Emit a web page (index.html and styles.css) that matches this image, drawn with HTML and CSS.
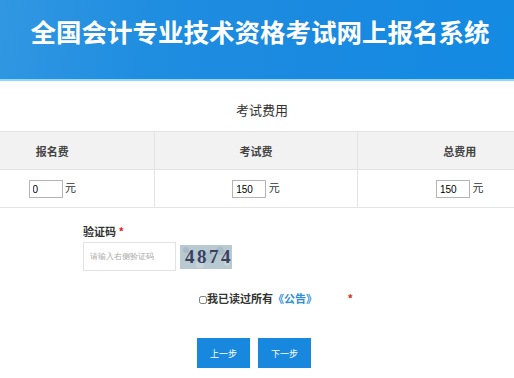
FILE: index.html
```html
<!DOCTYPE html>
<html>
<head>
    <title>全国会计专业技术资格考试网上报名系统</title>
    <link rel="stylesheet" href="styles.css">
</head>
<body>
    <div class="top">
        <p class="top-title">全国会计专业技术资格考试网上报名系统</p>
    </div>
    <!-- fees -->
    <p class="fee-title">考试费用</p>
    <div class="fee-wrap">
        <table class="fees">
            <tr>
                <th>报名费</th>
                <th>考试费</th>
                <th>总费用</th>
            </tr>
            <tr>
                <td><input type="text" class="money" value="0"> 元</td>
                <td><input type="text" class="money" value="150"> 元</td>
                <td><input type="text" class="money" value="150"> 元</td>
            </tr>
        </table>
    </div>
    <!-- captcha -->
    <div class="code">
        <label class="lbl" for="yzm">验证码 <span class="red">*</span></label>
        <div class="code-row">
            <input type="text" id="yzm" class="code-input" placeholder="请输入右侧验证码">
            <div class="code-img">
                <svg width="52" height="24" viewBox="0 0 52 24">
                    <rect width="52" height="24" fill="#b9c9d1"/>
                    <circle cx="6" cy="5" r="3" fill="#a6bbc6"/>
                    <circle cx="20" cy="19" r="4" fill="#c7d5db"/>
                    <circle cx="40" cy="6" r="4" fill="#a9bdc7"/>
                    <circle cx="47" cy="18" r="3" fill="#c6d4da"/>
                    <circle cx="30" cy="12" r="5" fill="#adc1ca"/>
                </svg>
                <span class="code-txt">4874</span>
            </div>
        </div>
    </div>
    <div class="agree">
        <label><input type="checkbox" class="chk">我已读过所有<a href="#" class="notice">《公告》</a></label>
        <span class="red star">*</span>
    </div>
    <div class="btns">
        <button class="btn">上一步</button>
        <button class="btn">下一步</button>
    </div>
</body>
</html>
```

FILE: styles.css
```css
body {
    margin: 0;
    overflow: hidden;
    font-family: "Noto Sans CJK SC", "Noto Sans", sans-serif;
    color: #333;
    background-color: #fff;
}
.top {
    height: 79px;
    background: linear-gradient(100deg, #3197e2 0%, #1f8de0 30%, #1a8ae0 60%, #138ae3 100%);
    border-bottom: 2px solid #8fd8f5;
}
.top-title {
    margin: 0;
    padding-top: 13px;
    padding-left: 6px;
    text-align: center;
    font-size: 25.5px;
    font-weight: bold;
    line-height: 36px;
    color: #fff;
}
.fee-title {
    margin: 19px 0 0 0;
    text-align: center;
    font-size: 13px;
    line-height: 20px;
    padding-left: 10px;
}
.fee-wrap {
    margin-top: 11px;
    overflow: hidden;
}
.fees {
    margin-left: -50px;
    width: 612px;
    border-collapse: collapse;
    font-size: 11px;
}
.fees th {
    height: 35px;
    width: 204px;
    background-color: #f2f2f2;
    border: 1px solid #e4e4e4;
    font-weight: bold;
    color: #444;
}
.fees td {
    height: 35px;
    border: 1px solid #e4e4e4;
    text-align: center;
}
.money {
    width: 26px;
    height: 16px;
    padding: 0 3px;
    margin: 0;
    border: 1px solid #b5b5b5;
    font-size: 10px;
    font-family: "Liberation Sans", sans-serif;
    vertical-align: middle;
}
.code {
    margin: 15px 0 0 83px;
}
.lbl {
    display: block;
    font-size: 11px;
    font-weight: bold;
    line-height: 16px;
}
.red {
    color: #e02020;
}
.code-row {
    display: flex;
    align-items: center;
    margin-top: 3px;
}
.code-input {
    width: 93px;
    height: 29px;
    box-sizing: border-box;
    border: 1px solid #e2e2e2;
    padding: 0 6px;
    margin: 0;
    font-size: 8px;
}
.code-input::placeholder {
    color: #aaa;
}
.code-img {
    position: relative;
    width: 52px;
    height: 24px;
    margin-left: 4px;
}
.code-img svg {
    display: block;
}
.code-txt {
    position: absolute;
    left: 5px;
    top: 0;
    font-family: "Liberation Serif", serif;
    font-size: 19px;
    font-weight: bold;
    line-height: 24px;
    letter-spacing: 2.5px;
    color: #3b3f5e;
}
.agree {
    margin-top: 19px;
    padding-left: 199px;
    font-size: 11px;
    font-weight: bold;
    line-height: 16px;
}
.chk {
    width: 8px;
    height: 8px;
    margin: 0;
    vertical-align: -1px;
}
.notice {
    color: #2e8fd8;
    text-decoration: none;
}
.star {
    margin-left: 28px;
}
.btns {
    display: flex;
    gap: 8px;
    margin-top: 32px;
    padding-left: 197px;
}
.btn {
    width: 53px;
    height: 30px;
    background-color: #1788dd;
    color: #fff;
    border: none;
    font-size: 9px;
    font-family: "Noto Sans CJK SC", sans-serif;
    cursor: pointer;
}
```
